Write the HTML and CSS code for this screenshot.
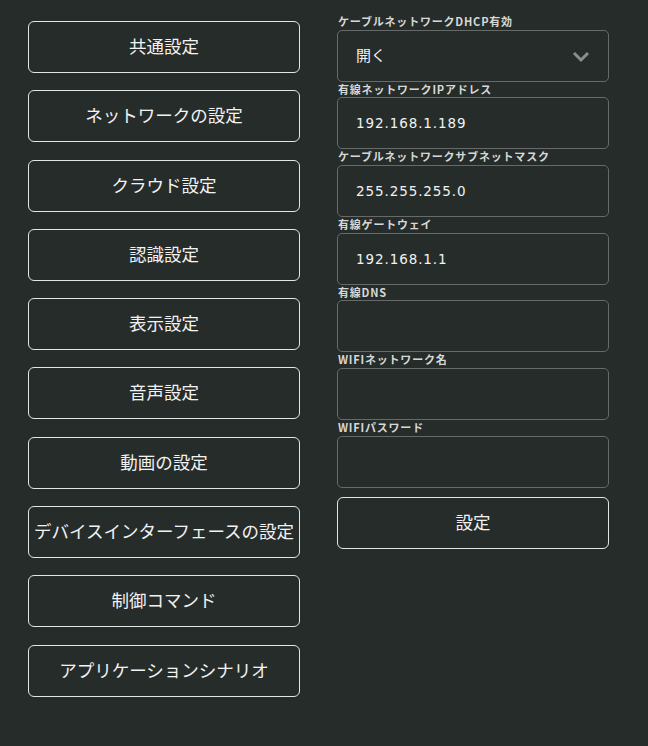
FILE: index.html
```html
<!DOCTYPE html>
<html lang="ja">
<head>
    <meta charset="UTF-8">
    <meta name="viewport" content="width=device-width, initial-scale=1.0">
    <title>設定</title>
    <link rel="stylesheet" href="styles.css">
</head>
<body>
    <div class="page">
        <div class="menu">
            <button class="menu-btn">共通設定</button>
            <button class="menu-btn">ネットワークの設定</button>
            <button class="menu-btn">クラウド設定</button>
            <button class="menu-btn">認識設定</button>
            <button class="menu-btn">表示設定</button>
            <button class="menu-btn">音声設定</button>
            <button class="menu-btn">動画の設定</button>
            <button class="menu-btn">デバイスインターフェースの設定</button>
            <button class="menu-btn">制御コマンド</button>
            <button class="menu-btn">アプリケーションシナリオ</button>
        </div>

        <div class="form">
            <div class="field">
                <label class="field-label">ケーブルネットワークDHCP有効</label>
                <div class="select">
                    <span>開く</span>
                    <svg class="chevron" width="18" height="12" viewBox="0 0 18 12">
                        <path d="M2 2 L9 9 L16 2" fill="none" stroke="#8a8e8c" stroke-width="3"/>
                    </svg>
                </div>
            </div>
            <div class="field">
                <label class="field-label">有線ネットワークIPアドレス</label>
                <input class="text-input" type="text" value="192.168.1.189">
            </div>
            <div class="field">
                <label class="field-label">ケーブルネットワークサブネットマスク</label>
                <input class="text-input" type="text" value="255.255.255.0">
            </div>
            <div class="field">
                <label class="field-label">有線ゲートウェイ</label>
                <input class="text-input" type="text" value="192.168.1.1">
            </div>
            <div class="field">
                <label class="field-label">有線DNS</label>
                <input class="text-input" type="text" value="">
            </div>
            <div class="field">
                <label class="field-label">WIFIネットワーク名</label>
                <input class="text-input" type="text" value="">
            </div>
            <div class="field">
                <label class="field-label">WIFIパスワード</label>
                <input class="text-input" type="password" value="">
            </div>
            <button class="menu-btn submit-btn">設定</button>
        </div>
    </div>
</body>
</html>
```

FILE: styles.css
```css
body {
    margin: 0;
    background-color: #262c2a;
    color: #f0f0f0;
    font-family: 'Noto Sans CJK JP', 'Noto Sans', sans-serif;
}

.page {
    display: flex;
    gap: 37px;
    padding: 14px 28px;
}

.menu {
    display: flex;
    flex-direction: column;
    gap: 17.3px;
    width: 272px;
    margin-top: 7px;
}

.menu-btn {
    height: 52px;
    width: 272px;
    background: transparent;
    border: 1px solid #e4e6e5;
    border-radius: 6px;
    color: #f2f2f2;
    font-family: inherit;
    font-size: 17.5px;
    padding: 0 0 3px 0;
    cursor: pointer;
}

.form {
    display: flex;
    flex-direction: column;
    width: 272px;
}

.field {
    display: flex;
    flex-direction: column;
}

.field-label {
    height: 15.67px;
    line-height: 15.67px;
    font-size: 11px;
    font-weight: 600;
    letter-spacing: 0.8px;
    color: #d6d8d7;
    padding-left: 1px;
}

.select,
.text-input {
    box-sizing: border-box;
    height: 52px;
    width: 272px;
    border: 1px solid #666a68;
    border-radius: 5px;
    background: transparent;
    color: #f2f2f2;
}

.select {
    display: flex;
    align-items: center;
    justify-content: space-between;
    padding: 0 18px 2px 18px;
    font-size: 15px;
}

.chevron {
    margin-top: 4px;
}

.text-input {
    padding: 0 18px;
    font-family: 'DejaVu Sans', sans-serif;
    font-size: 13.5px;
    letter-spacing: 0.9px;
    outline: none;
}

.submit-btn {
    margin-top: 9px;
}
```
